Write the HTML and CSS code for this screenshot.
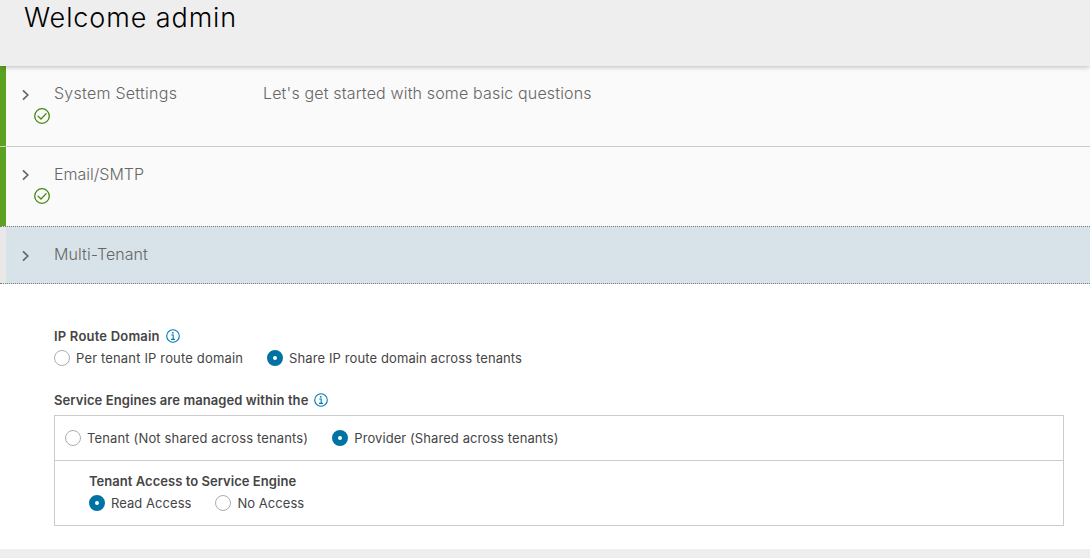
FILE: index.html
```html
<!DOCTYPE html>
<html lang="en">
<head>
<meta charset="utf-8">
<title>Welcome admin</title>
<link rel="stylesheet" href="styles.css">
</head>
<body>
<svg class="defs" width="0" height="0">
  <symbol id="chevron" viewBox="0 0 8 12"><path d="M1 1.3 5.8 6 1 10.7" fill="none" stroke="currentColor" stroke-width="1.7"/></symbol>
  <symbol id="check" viewBox="0 0 16 16"><circle cx="8" cy="8" r="7.3" fill="none" stroke="currentColor" stroke-width="1.3"/><path d="M4 8.1 7 11l5.2-5.4" fill="none" stroke="currentColor" stroke-width="1.3" stroke-linecap="round"/></symbol>
  <symbol id="info" viewBox="0 0 14 14"><circle cx="7" cy="7" r="6.3" fill="none" stroke="currentColor" stroke-width="1.1"/><circle cx="6.8" cy="3.8" r=".9" fill="currentColor"/><path d="M5.3 6h1.9v4.2M5 10.4h4" fill="none" stroke="currentColor" stroke-width="1.1"/></symbol>
</svg>
<header class="header"><h1 class="heading">Welcome admin</h1></header>
<main class="wizard">
  <section class="step done">
    <svg class="chevron"><use href="#chevron"/></svg>
    <div class="step-title"><span class="t-system">System Settings</span><svg class="check"><use href="#check"/></svg></div>
    <p class="step-description">Let's get started with some basic questions</p>
  </section>
  <section class="step done last-done">
    <svg class="chevron"><use href="#chevron"/></svg>
    <div class="step-title"><span class="t-email">Email/SMTP</span><svg class="check"><use href="#check"/></svg></div>
  </section>
  <section class="step active">
    <svg class="chevron"><use href="#chevron"/></svg>
    <div class="step-title"><span class="t-multi">Multi-Tenant</span></div>
  </section>
  <form class="content">
    <h2 class="label"><span class="t-route">IP Route Domain</span><svg class="info"><use href="#info"/></svg></h2>
    <div class="options">
      <label class="option"><input class="radio" type="radio" name="route"><span class="t-per">Per tenant IP route domain</span></label>
      <label class="option"><input class="radio" type="radio" name="route" checked><span class="t-share">Share IP route domain across tenants</span></label>
    </div>
    <h2 class="label engines"><span class="t-engines">Service Engines are managed within the</span><svg class="info"><use href="#info"/></svg></h2>
    <div class="panel">
      <div class="options panel-top">
        <label class="option"><input class="radio" type="radio" name="engine"><span class="t-tenant">Tenant (Not shared across tenants)</span></label>
        <label class="option"><input class="radio" type="radio" name="engine" checked><span class="t-provider">Provider (Shared across tenants)</span></label>
      </div>
      <div class="panel-bottom">
        <h2 class="label"><span class="t-access">Tenant Access to Service Engine</span></h2>
        <div class="options">
          <label class="option"><input class="radio" type="radio" name="access" checked><span class="t-read">Read Access</span></label>
          <label class="option"><input class="radio" type="radio" name="access"><span class="t-no">No Access</span></label>
        </div>
      </div>
    </div>
  </form>
</main>
</body>
</html>
```
FILE: styles.css
```css
* { box-sizing: border-box; }
body { margin: 0; height: 558px; overflow: hidden; background: #eee; color: #454545; font-family: Inter, "Open Sans", sans-serif; font-size: 13px; }
.defs { display: block; }
h1, h2, p { margin: 0; }
.header { height: 66px; padding-left: 24px; background: #eee; position: relative; box-shadow: 0 1px 5px rgba(0,0,0,.25); }
.heading { font-size: 27px; line-height: 36px; font-weight: 300; color: #000; white-space: nowrap; letter-spacing: .9px; }
.wizard { background: #fff; height: 483px; }
.step { display: flex; height: 81px; border-bottom: 1px solid #ccc; color: #666; font-size: 16px; font-weight: 300; line-height: 20px; padding: 17px 0 0 22px; }
.step.done { background: linear-gradient(to right, #5aa220 6px, #fafafa 6px); }
.step.last-done { height: 80px; border-bottom: 1px dotted #777; background: linear-gradient(to right, #5aa220 6px, #fafafa 6px) padding-box, #e8e8e8; }
.step.active { height: 57px; border-bottom: 1px dotted #777; background: linear-gradient(to right, #e8e8e8 6px, #d8e3e9 6px); }
.chevron { width: 8px; height: 12px; margin-top: 6px; }
.last-done .chevron { margin-top: 5px; }
.step-title { width: 209px; margin-left: 24px; white-space: nowrap; }
.step-title span { display: block; height: 25px; }
.step-title .t-email { height: 24px; }
.step-description { letter-spacing: .16px; }
.check { display: block; width: 16px; height: 16px; margin-left: -20px; color: #43870d; }
.content { padding: 43px 26px 0 54px; }
.label { display: flex; align-items: center; height: 18px; font-size: 13px; line-height: 18px; font-weight: 600; white-space: nowrap; }
.info { width: 14px; height: 14px; margin-left: 6px; color: #0079b8; }
.options { display: flex; gap: 24px; padding-top: 5px; }
.option { display: flex; align-items: center; gap: 6px; height: 16px; line-height: 16px; white-space: nowrap; }
.radio { appearance: none; width: 16px; height: 16px; margin: 0; border: 1px solid #adadad; border-radius: 50%; background: #fff; }
.radio:checked { border: 6px solid #0072a3; }
.engines { margin-top: 25px; }
.panel { height: 111px; margin-top: 6px; border: 1px solid #ccc; }
.panel-top { height: 45px; padding: 14px 0 0 10px; border-bottom: 1px solid #ccc; }
.panel-bottom { padding: 11px 0 0 34px; }

/* Tracking per label */
.t-system { letter-spacing: .26px; }
.t-multi { letter-spacing: .08px; }
.t-route { letter-spacing: .2px; }
.t-per { letter-spacing: .16px; }
.t-share { letter-spacing: .11px; }
.t-engines { letter-spacing: .08px; }
.t-tenant { letter-spacing: .15px; }
.t-provider { letter-spacing: .08px; }
.t-access { letter-spacing: .04px; }
.t-read { letter-spacing: .05px; }
.t-no { letter-spacing: .04px; }
```
